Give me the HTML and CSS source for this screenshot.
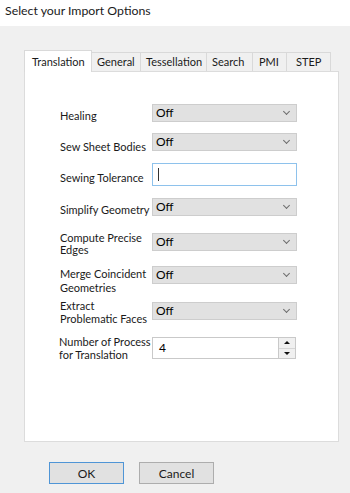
FILE: index.html
```html
<!DOCTYPE html>
<html lang="en">
<head>
    <meta charset="UTF-8">
    <title>Select your Import Options</title>
    <link rel="stylesheet" href="styles.css">
</head>
<body>

    <div class="titlebar">Select your Import Options</div>

    <div class="dialog">
        <div class="tabs">
            <div class="tab active tab-translation">Translation</div>
            <div class="tab tab-general">General</div>
            <div class="tab tab-tess">Tessellation</div>
            <div class="tab tab-search">Search</div>
            <div class="tab tab-pmi">PMI</div>
            <div class="tab tab-step">STEP</div>
        </div>

        <div class="panel">
            <div class="row row-healing">
                <label class="label">Healing</label>
                <div class="combo">Off<span class="chev"></span></div>
            </div>
            <div class="row row-sew">
                <label class="label">Sew Sheet Bodies</label>
                <div class="combo">Off<span class="chev"></span></div>
            </div>
            <div class="row row-tol">
                <label class="label">Sewing Tolerance</label>
                <div class="textbox"><span class="caret"></span></div>
            </div>
            <div class="row row-simplify">
                <label class="label">Simplify Geometry</label>
                <div class="combo">Off<span class="chev"></span></div>
            </div>
            <div class="row row-compute">
                <label class="label">Compute Precise<br>Edges</label>
                <div class="combo">Off<span class="chev"></span></div>
            </div>
            <div class="row row-merge">
                <label class="label">Merge Coincident<br>Geometries</label>
                <div class="combo">Off<span class="chev"></span></div>
            </div>
            <div class="row row-extract">
                <label class="label">Extract<br>Problematic Faces</label>
                <div class="combo">Off<span class="chev"></span></div>
            </div>
            <div class="row row-number">
                <label class="label">Number of Process<br>for Translation</label>
                <div class="spinner">
                    <div class="spin-value">4</div>
                    <div class="spin-btns">
                        <div class="spin-btn"><span class="tri-up"></span></div>
                        <div class="spin-btn"><span class="tri-down"></span></div>
                    </div>
                </div>
            </div>
        </div>

        <div class="buttons">
            <button class="btn btn-default">OK</button>
            <button class="btn">Cancel</button>
        </div>
    </div>

</body>
</html>
```

FILE: styles.css
```css
body {
    margin: 0;
    width: 350px;
    height: 493px;
    font-family: Lato, "Segoe UI", sans-serif;
    font-size: 11px;
    color: #000;
    background: #f0f0f0;
    overflow: hidden;
}

.titlebar {
    height: 26px;
    background: #fff;
    padding-left: 5px;
    font-size: 12.3px;
    line-height: 22px;
    color: #1a1a1a;
}

.dialog {
    padding: 24px 0 0 24px;
}

.tabs {
    display: flex;
    align-items: flex-end;
    height: 21px;
}

.tab {
    height: 19px;
    line-height: 18px;
    padding-left: 5px;
    border: 1px solid #d9d9d9;
    border-bottom: none;
    border-left: none;
    background: #f0f0f0;
    box-sizing: border-box;
    white-space: nowrap;
    color: #1a1a1a;
}

.tab.active {
    height: 22px;
    margin-bottom: -1px;
    background: #fff;
    border-left: 1px solid #d9d9d9;
    padding-left: 7px;
    line-height: 21px;
    position: relative;
    z-index: 1;
}

.tab-translation { width: 68px; }
.tab-general { width: 49px; }
.tab-tess { width: 66px; }
.tab-search { width: 46px; }
.tab-pmi { width: 34px; padding-left: 6px; }
.tab-step { width: 44px; padding-left: 9px; }

.panel {
    width: 315px;
    height: 371px;
    box-sizing: border-box;
    background: #fff;
    border: 1px solid #dcdcdc;
    padding: 32px 0 0 35px;
}

.row {
    display: flex;
    align-items: flex-start;
}

.label {
    width: 92px;
    flex: none;
    line-height: 13px;
    white-space: nowrap;
    color: #1a1a1a;
}

.row-healing { height: 29px; }
.row-healing .label { padding-top: 5px; }
.row-sew { height: 30px; }
.row-sew .label { padding-top: 7px; }
.row-tol { height: 35px; }
.row-tol .label { padding-top: 8px; }
.row-simplify { height: 35px; }
.row-simplify .label { padding-top: 5px; }
.row-compute { height: 33px; }
.row-compute .label { margin-top: -1px; line-height: 12px; }
.row-merge { height: 36px; }
.row-merge .label { padding-top: 1px; line-height: 14px; }
.row-extract { height: 35px; }
.row-extract .label { margin-top: -3px; }
.row-number .label { margin-top: -2px; margin-left: -1px; width: 93px; }

.combo {
    position: relative;
    width: 145px;
    height: 18px;
    box-sizing: border-box;
    background: #e1e1e1;
    border: 1px solid #cdcdcd;
    padding-left: 3px;
    line-height: 15px;
    font-size: 12px;
}

.chev {
    position: absolute;
    right: 7px;
    top: 4px;
    width: 4px;
    height: 4px;
    border-right: 1px solid #6d6d6d;
    border-bottom: 1px solid #6d6d6d;
    transform: rotate(45deg);
}

.textbox {
    width: 145px;
    height: 23px;
    box-sizing: border-box;
    background: #fff;
    border: 1px solid #8ec2ec;
    padding: 4px 0 0 5px;
}

.caret {
    display: block;
    width: 1px;
    height: 13px;
    background: #333;
}

.spinner {
    display: flex;
    width: 144px;
    height: 22px;
}

.spin-value {
    flex: 1;
    box-sizing: border-box;
    border: 1px solid #c9c9c9;
    border-right: none;
    background: #fff;
    padding: 2px 0 0 6px;
    line-height: 16px;
    font-size: 12px;
}

.spin-btns {
    width: 18px;
    display: flex;
    flex-direction: column;
    border: 1px solid #c9c9c9;
    box-sizing: border-box;
}

.spin-btn {
    flex: 1;
    background: #f0f0f0;
    display: flex;
    align-items: center;
    justify-content: center;
}

.spin-btn + .spin-btn {
    border-top: 1px solid #d6d6d6;
}

.tri-up {
    border-left: 3px solid transparent;
    border-right: 3px solid transparent;
    border-bottom: 3px solid #111;
}

.tri-down {
    border-left: 3px solid transparent;
    border-right: 3px solid transparent;
    border-top: 3px solid #111;
}

.buttons {
    display: flex;
    gap: 15px;
    padding: 20px 0 0 25px;
}

.btn {
    width: 75px;
    height: 22px;
    margin: 0;
    padding: 0;
    font-family: inherit;
    font-size: 12px;
    color: #1a1a1a;
    background: #e1e1e1;
    border: 1px solid #adadad;
}

.btn-default {
    border-color: #4f95d6;
}
```
